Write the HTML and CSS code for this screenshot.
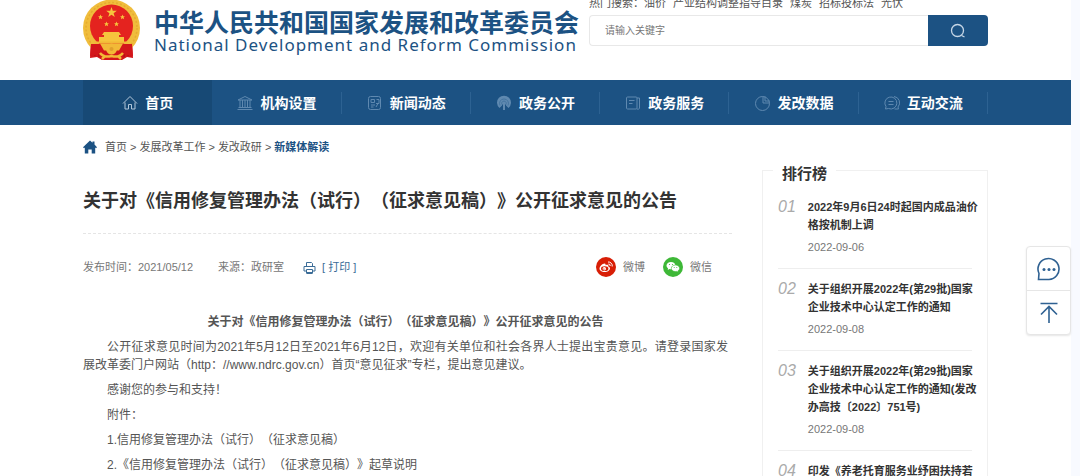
FILE: index.html
```html
<!DOCTYPE html>
<html lang="zh-CN">
<head>
    <meta charset="UTF-8">
    <meta name="viewport" content="width=device-width, initial-scale=1.0">
    <title>关于对《信用修复管理办法（试行）（征求意见稿）》公开征求意见的公告</title>
    <link rel="stylesheet" href="styles.css">
</head>
<body>
<div class="page">

    <!-- Header -->
    <header class="header container">
        <a class="logo" href="#">
            <svg class="emblem" viewBox="0 0 57 60" width="57" height="60" aria-hidden="true">
                <path d="M8 42 L7 58 L14 57 L19 60 H39 L44 57 L50 58 L49 42z" fill="#d3161b"/>
                <path d="M10 46l2 10M15 48l1 9M47 46l-2 10M42 48l-1 9" stroke="#a80f14" fill="none"/>
                <circle cx="28.500" cy="28" r="28.500" fill="#f0bd3c"/>
                <circle cx="28.500" cy="28" r="25.500" fill="none" stroke="#e6ab30" stroke-width="1.500" stroke-dasharray="2 2"/>
                <path d="M8 44L49 44L50 56L39 54L36 60H21L18 54L7 56z" fill="#d3161b"/>
                <circle cx="28.500" cy="26" r="21.500" fill="#e4231f"/>
                <path d="M28.500 7l1.300 3.800h4l-3.200 2.400 1.200 3.900-3.300-2.400-3.300 2.400 1.200-3.900-3.200-2.400h4z" fill="#f6c53d"/>
                <g fill="#f6c53d">
                    <path id="star" d="M17.500 14.500l.7 1.700h1.700l-1.300 1.200.5 1.800-1.600-1-1.600 1 .5-1.800-1.300-1.200h1.700z"/>
                    <use href="#star" x="22"/>
                    <use href="#star" x="6" y="7"/>
                    <use href="#star" x="16" y="7"/>
                </g>
                <path d="M21 32h15l2 3h-2v2h5v5H16v-5h5v-2h-2z" fill="#f6c53d"/>
                <path d="M10 41.500h37l-3 2H13z" fill="#f2b937"/>
                <path d="M17 43.500h23l-4 7H21z" fill="#f2b937"/>
                <circle cx="28.500" cy="49" r="5.500" fill="#f2b937"/>
                <circle cx="28.500" cy="49" r="2" fill="#e0a02c"/>
                <path d="M17 53q4 5 11.500 3 7.500 2 11.500-3M22 56l-3 3M35 56l3 3" stroke="#f2b937" stroke-width="2.500" fill="none"/>
            </svg>
            <span class="logo-text">
                <span class="logo-cn">中华人民共和国国家发展和改革委员会</span>
                <span class="logo-en">National Development and Reform Commission</span>
            </span>
        </a>
        <div class="search">
            <div class="hot">
                <span>热门搜索：<a href="#">油价</a></span>
                <a href="#">产业结构调整指导目录</a>
                <a href="#">煤炭</a>
                <a href="#">招标投标法</a>
                <a href="#">光伏</a>
            </div>
            <form class="search-form">
                <input type="text" class="search-input" placeholder="请输入关键字" aria-label="请输入关键字">
                <button type="submit" class="search-btn" aria-label="搜索">
                    <svg viewBox="0 0 16 16" width="16" height="16"><circle cx="7.500" cy="7.500" r="6"/><path d="M11.500 12.500l3 1.500"/></svg>
                </button>
            </form>
        </div>
    </header>

    <!-- Main navigation -->
    <nav class="nav">
        <div class="nav-list container">
            <a class="nav-item active" href="#">
                <svg viewBox="0 0 16 16"><path d="M1 8.500L8 1.500l7 7M3 7.500v6.500h3.500v-4.500h3v4.500H13V7.500"/></svg>首页</a>
            <a class="nav-item" href="#">
                <svg viewBox="0 0 16 16"><path d="M1 5l7-3.500L15 5zM.5 14.500h15M1.500 12.500h13M3 5v7.500M5.500 5v7.500M8 5v7.500M10.500 5v7.500M13 5v7.500"/></svg>机构设置</a>
            <a class="nav-item" href="#">
                <svg viewBox="0 0 16 16"><rect x="1.500" y="1.500" width="12" height="13" rx="2"/><path d="M4 4.500h3.500v3H4zM9.500 4.500H12v4H9M4 10h4M4 12h2.500M9 12l2-3.500"/></svg>新闻动态</a>
            <a class="nav-item" href="#">
                <svg viewBox="0 0 16 16"><path class="solid" d="M3.500 13A7 7 0 1 1 12.500 13L10 10.500V9.500H9v5.500H7V9.500H6v1z"/><path class="gap" d="M4 10.500a4.500 4.500 0 1 1 8 0M6 9.500a2.300 2.300 0 1 1 4 0"/></svg>政务公开</a>
            <a class="nav-item" href="#">
                <svg viewBox="0 0 16 16"><rect x="1.500" y="2" width="10.500" height="12" rx="1"/><path d="M12 3h2.500v10c0 1-1 1.500-2.500 1M4 5.500h5.500M4 8.500h3.500"/></svg>政务服务</a>
            <a class="nav-item" href="#">
                <svg viewBox="0 0 16 16"><circle cx="7.500" cy="8.500" r="7"/><path d="M8 1.500v6.500h6.500M10 1.500v4.500h4.500"/></svg>发改数据</a>
            <a class="nav-item" href="#">
                <svg viewBox="0 0 16 16"><path d="M1.500 14l.5-2.500a6 6 0 1 1 2.500 2zM10 1.500a6.300 6.300 0 0 1 4 10.500l.5 2h-4M4.500 6.500h5M4.500 9.500h5"/></svg>互动交流</a>
        </div>
    </nav>

    <div class="content container">
        <main class="main">
            <div class="crumbs">
                <svg viewBox="0 0 14 14" width="14" height="14"><path d="M7 .5l2.500 2.300V1.500h2v3L14 7.200l-1 1-.8-.7V13.500H8.700V9.500H5.300v4H1.800V7.500L1 8.200l-1-1z"/></svg>
                <a href="#">首页</a> &gt; <a href="#">发展改革工作</a> &gt; <a href="#">发改政研</a> &gt; <a class="current" href="#">新媒体解读</a>
            </div>

            <h1 class="title">关于对《信用修复管理办法（试行）（征求意见稿）》公开征求意见的公告</h1>

            <div class="meta">
                <span class="date">发布时间：2021/05/12</span>
                <span class="source">来源：政研室</span>
                <button type="button" class="print">
                    <svg viewBox="0 0 13 13" width="13" height="13"><path d="M3.500 5V1.500h5L9.500 2.500V5M3 10H1V5.500h11V10h-2M3.500 8.500h6V12h-6z"/><path d="M3.500 12h6" stroke-width="2"/></svg>
                    [ 打印 ]
                </button>
                <div class="share">
                    <a href="#">
                        <svg viewBox="0 0 20 20" width="20" height="20">
                            <circle cx="10" cy="10" r="10" fill="#d81e06"/>
                            <path d="M3.500 11.500c0-2 3-5 5-5 1.200 0 1.300.8 1 1.700 1.800-.8 3.300-.5 2.800 1.200 1 .3 1.700.8 1.700 1.800 0 2-2.500 3.800-5.300 3.800s-5.200-1.400-5.200-3.500z" fill="#fff"/>
                            <ellipse cx="8.700" cy="11.700" rx="3.700" ry="2.400" fill="#d81e06"/>
                            <circle cx="8.300" cy="11.800" r="1.700" fill="#fff"/>
                            <circle cx="7.900" cy="12.100" r=".7" fill="#d81e06"/>
                            <path d="M12 5a3.800 3.800 0 0 1 4.200 4.500M12.300 7a1.800 1.800 0 0 1 1.900 2" fill="none" stroke="#fff"/>
                        </svg>微博</a>
                    <a href="#">
                        <svg viewBox="0 0 20 20" width="20" height="20">
                            <circle cx="10" cy="10" r="10" fill="#3eb837"/>
                            <path d="M8 5c-2.500 0-4.500 1.500-4.500 3.600 0 1.200.6 2.100 1.600 2.800L4.700 13l1.800-.9c.5.1 1 .2 1.500.2 2.500 0 4.500-1.600 4.500-3.700S10.500 5 8 5z" fill="#fff"/>
                            <path d="M12.500 8c-2.400 0-4.200 1.500-4.200 3.300s1.800 3.300 4.200 3.300l1.300-.2 1.500.8-.4-1.300c1-.6 1.700-1.500 1.700-2.600 0-1.800-1.900-3.300-4.100-3.300z" fill="#fff" stroke="#3eb837" stroke-width=".6"/>
                            <g fill="#3eb837"><circle cx="6.500" cy="7.500" r=".6"/><circle cx="9.500" cy="7.500" r=".6"/><circle cx="11.200" cy="10.500" r=".5"/><circle cx="13.800" cy="10.500" r=".5"/></g>
                        </svg>微信</a>
                </div>
            </div>

            <article class="article">
                <h2>关于对《信用修复管理办法（试行）（征求意见稿）》公开征求意见的公告</h2>
                <p>公开征求意见时间为2021年5月12日至2021年6月12日，欢迎有关单位和社会各界人士提出宝贵意见。请登录国家发展改革委门户网站（http：//www.ndrc.gov.cn）首页“意见征求”专栏，提出意见建议。</p>
                <p>感谢您的参与和支持！</p>
                <p>附件：</p>
                <p><a href="#">1.信用修复管理办法（试行）（征求意见稿）</a></p>
                <p><a href="#">2.《信用修复管理办法（试行）（征求意见稿）》起草说明</a></p>
            </article>
        </main>

        <!-- Ranking -->
        <aside class="rank">
            <h2 class="rank-title">排行榜</h2>
            <ol class="rank-list">
                <li>
                    <span class="num">01</span>
                    <div class="rank-body">
                        <a href="#">2022年9月6日24时起国内成品油价格按机制上调</a>
                        <time>2022-09-06</time>
                    </div>
                </li>
                <li>
                    <span class="num">02</span>
                    <div class="rank-body">
                        <a href="#">关于组织开展2022年(第29批)国家企业技术中心认定工作的通知</a>
                        <time>2022-09-08</time>
                    </div>
                </li>
                <li>
                    <span class="num">03</span>
                    <div class="rank-body">
                        <a href="#">关于组织开展2022年(第29批)国家企业技术中心认定工作的通知(发改办高技〔2022〕751号)</a>
                        <time>2022-09-08</time>
                    </div>
                </li>
                <li>
                    <span class="num">04</span>
                    <div class="rank-body">
                        <a href="#">印发《养老托育服务业纾困扶持若</a>
                    </div>
                </li>
            </ol>
        </aside>
    </div>
</div>

<!-- Floating tools -->
<div class="tools">
    <button type="button" aria-label="留言">
        <svg viewBox="0 0 24 24" width="24" height="24"><path d="M1.500 22.500l.5-6A10.500 10.500 0 1 1 12 22.500z"/><g class="dots"><circle cx="7" cy="12.500" r="1.500"/><circle cx="12" cy="12.500" r="1.500"/><circle cx="17" cy="12.500" r="1.500"/></g></svg>
    </button>
    <button type="button" aria-label="返回顶部">
        <svg viewBox="0 0 24 24" width="24" height="24"><path d="M3.500 2.500h17M12 22V6M4 13.500l8-8 8 8"/></svg>
    </button>
</div>

</body>
</html>
```
FILE: styles.css
```css
* {
    box-sizing: border-box;
}
body {
    margin: 0;
    height: 100vh;
    overflow: hidden;
    padding-right: 9px;
    background-color: #f8faff;
    font-family: "Liberation Sans", Arial, "Noto Sans CJK SC", sans-serif;
    font-size: 11px;
    line-height: 18px;
    color: #555;
    text-spacing-trim: space-all;
}
a {
    color: inherit;
    text-decoration: none;
}
button {
    padding: 0;
    border: none;
    background: none;
    font: inherit;
    cursor: pointer;
}
svg {
    flex: none;
    display: block;
}
.page {
    min-height: 100vh;
    background-color: #fff;
    overflow: hidden;
}
.container {
    max-width: 905px;
    margin: 0 auto;
}

/* header */
.header {
    display: flex;
    justify-content: space-between;
    height: 80px;
}
.logo {
    display: flex;
    gap: 14px;
    color: #1c5283;
}
.logo-text {
    display: flex;
    flex-direction: column;
    padding-top: 11px;
    white-space: nowrap;
}
.logo-cn {
    font-size: 25px;
    font-weight: bold;
    line-height: 25px;
}
.logo-en {
    font-family: "Noto Sans", "Open Sans", sans-serif;
    font-size: 17px;
    line-height: 17px;
    letter-spacing: 1px;
}
.search {
    width: 399px;
    margin-top: -6px;
}
.hot {
    display: flex;
    gap: 7px;
    margin-bottom: 3px;
    white-space: nowrap;
}
.search-form {
    display: flex;
    height: 31px;
}
.search-input {
    flex: 1;
    min-width: 0;
    padding: 0 15px;
    border: 1px solid #e8e8e8;
    border-right: none;
    border-radius: 4px 0 0 4px;
    font-family: inherit;
    font-size: 10px;
}
.search-input::placeholder {
    color: #777;
}
.search-btn {
    display: flex;
    align-items: center;
    justify-content: center;
    width: 60px;
    border-radius: 0 4px 4px 0;
    background-color: #1c5283;
}
.search-btn svg {
    fill: none;
    stroke: #c5d6e6;
    stroke-width: 1.3;
}

/* nav */
.nav {
    background-color: #1c5283;
}
.nav-list {
    display: flex;
}
.nav-item {
    position: relative;
    flex: 1;
    display: flex;
    align-items: center;
    justify-content: center;
    gap: 7px;
    height: 45px;
    color: #fff;
    font-size: 14px;
    font-weight: bold;
    white-space: nowrap;
}
.nav-item.active {
    background-color: #174975;
}
.nav-item + .nav-item::after {
    content: "";
    position: absolute;
    right: 0;
    top: 12px;
    bottom: 11px;
    border-right: 1px solid #2d6292;
}
.nav-item svg {
    width: 16px;
    height: 16px;
    fill: none;
    stroke: #5f89b0;
}
.nav-item svg .solid {
    fill: #5f89b0;
    stroke: none;
}
.nav-item svg .gap {
    stroke: #3a6b99;
    stroke-width: 0.7;
}
.nav-item.active svg {
    stroke: #b3c7d9;
}

/* content */
.content {
    display: grid;
    grid-template-columns: 1fr 226px;
    gap: 30px;
}
.main {
    padding-top: 13px;
}
.crumbs {
    display: flex;
    align-items: center;
    gap: 3px;
}
.crumbs svg {
    margin-right: 5px;
    fill: #1c5283;
}
.crumbs .current {
    color: #1c5283;
    font-weight: bold;
}
.title {
    margin: 0;
    padding: 31px 0 18px;
    border-bottom: 1px dashed #e5e5e5;
    color: #333;
    font-size: 18px;
    line-height: 28px;
}
.meta {
    display: flex;
    align-items: center;
    height: 20px;
    margin-top: 23px;
    color: #777;
}
.date {
    margin-right: 25px;
}
.source {
    margin-right: 19px;
}
.print {
    display: flex;
    align-items: center;
    gap: 6px;
    color: #3b6c97;
}
.print svg {
    fill: none;
    stroke: #3b6c97;
}
.share {
    display: flex;
    gap: 18px;
    margin: 0 20px 0 auto;
}
.share a {
    display: flex;
    align-items: center;
    gap: 7px;
}
.article {
    padding: 36px 4px 0 0;
    font-size: 12px;
}
.article h2 {
    margin: 0;
    font-size: 12px;
    text-align: center;
}
.article p {
    margin: 7px 0 0;
    text-indent: 2em;
    text-align: justify;
}

/* ranking */
.rank {
    margin-top: 45px;
    padding: 0 15px 20px;
    border: 1px solid #f0f0f0;
}
.rank-title {
    width: fit-content;
    margin: -7px 0 0 -5px;
    padding: 0 9px;
    background-color: #fff;
    color: #333;
    font-size: 15px;
    line-height: 20px;
}
.rank-list {
    margin: 0;
    padding: 3px 0 0;
    list-style: none;
}
.rank-list li {
    display: flex;
    gap: 12px;
    padding: 11px 0 12px;
    border-bottom: 1px solid #eee;
}
.num {
    color: #aaa;
    font-size: 16px;
    font-style: italic;
}
.rank-body {
    flex: 1;
    margin-right: -8px;
}
.rank-body a {
    display: block;
    color: #333;
    font-weight: bold;
}
.rank-body time {
    display: block;
    margin-top: 4px;
    color: #777;
}

/* floating tools */
.tools {
    position: fixed;
    top: 246px;
    right: 9px;
    width: 45px;
    border: 1px solid #e6e6e6;
    border-radius: 4px;
    background-color: #fff;
    box-shadow: 0 1px 2px #e6e6e6;
}
.tools button {
    display: flex;
    align-items: center;
    justify-content: center;
    width: 100%;
    height: 43px;
}
.tools button + button {
    height: 44px;
    border-top: 1px solid #e6e6e6;
}
.tools svg {
    fill: none;
    stroke: #2f6192;
    stroke-width: 1.6;
}
.tools .dots {
    fill: #2f6192;
    stroke: none;
}
```
